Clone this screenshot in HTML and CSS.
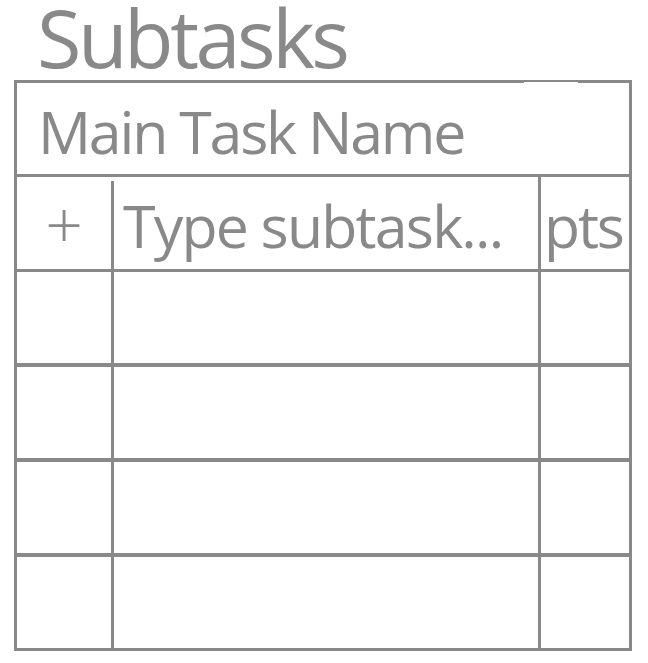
FILE: index.html
```html
<!DOCTYPE html>
<html lang="en">
<head>
    <meta charset="UTF-8">
    <meta name="viewport" content="width=device-width, initial-scale=1.0">
    <title>Subtasks</title>
    <link rel="stylesheet" href="styles.css">
</head>
<body>
    <h1 class="page-title">Subtasks</h1>

    <div class="subtask-box">
        <div class="task-name">Main Task Name</div>

        <div class="subtask-row entry-row">
            <div class="cell add-cell">+</div>
            <div class="cell name-cell">Type subtask...</div>
            <div class="cell pts-cell">pts</div>
        </div>

        <div class="subtask-row thick">
            <div class="cell add-cell"></div>
            <div class="cell name-cell"></div>
            <div class="cell pts-cell"></div>
        </div>
        <div class="subtask-row thick">
            <div class="cell add-cell"></div>
            <div class="cell name-cell"></div>
            <div class="cell pts-cell"></div>
        </div>
        <div class="subtask-row thick">
            <div class="cell add-cell"></div>
            <div class="cell name-cell"></div>
            <div class="cell pts-cell"></div>
        </div>
        <div class="subtask-row last">
            <div class="cell add-cell"></div>
            <div class="cell name-cell"></div>
            <div class="cell pts-cell"></div>
        </div>
    </div>
</body>
</html>
```

FILE: styles.css
```css
body {
    margin: 0;
    padding: 0;
    font-family: 'Open Sans', sans-serif;
    background-color: #fff;
    color: #898989;
}

.page-title {
    margin: 0;
    height: 73px;
    padding: 0 0 7px 37px;
    font-size: 81px;
    font-weight: normal;
    line-height: 73px;
    letter-spacing: -3.5px;
}

.subtask-box {
    position: relative;
    margin-left: 14px;
    width: 618px;
    border: 3px solid #898989;
    box-sizing: border-box;
}

/* thinner bit of the top edge */
.subtask-box::before {
    content: "";
    position: absolute;
    top: -1px;
    left: 507px;
    width: 54px;
    height: 1px;
    background-color: #fff;
}

.task-name {
    height: 85px;
    padding: 6px 0 0 21px;
    border-bottom: 3px solid #898989;
    font-size: 59px;
    line-height: 85px;
    letter-spacing: -2.2px;
}

.subtask-row {
    display: grid;
    grid-template-columns: 97px 427px 88px;
    height: 92px;
    border-bottom: 3px solid #898989;
}

.subtask-row.thick {
    height: 91px;
    border-bottom-width: 4px;
}

.subtask-row.last {
    height: 91px;
    border-bottom: none;
}

.cell {
    border-right: 3px solid #898989;
}

.cell.pts-cell {
    border-right: none;
}

.entry-row .add-cell {
    margin-top: 4px;
    text-align: center;
    font-size: 66px;
    font-weight: 300;
    line-height: 84px;
}

.entry-row .name-cell {
    padding: 4px 0 0 9px;
    font-size: 59px;
    line-height: 88px;
    letter-spacing: -1.8px;
    white-space: nowrap;
}

.entry-row .pts-cell {
    padding: 4px 0 0 3px;
    font-size: 59px;
    line-height: 88px;
    letter-spacing: -2.2px;
}
```
